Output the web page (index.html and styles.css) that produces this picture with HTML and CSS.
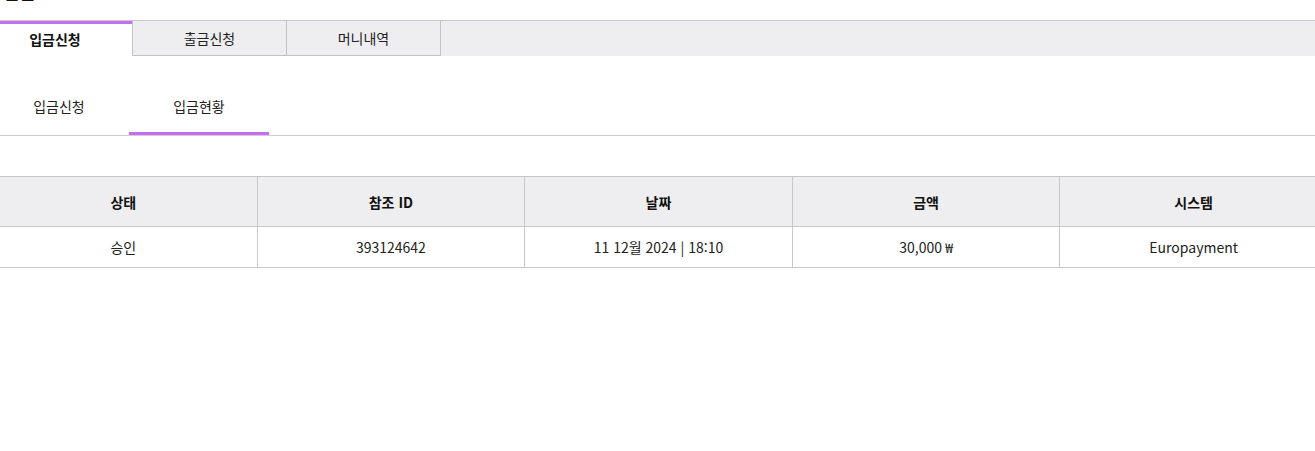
FILE: index.html
```html
<!DOCTYPE html>
<html lang="ko">
<head>
<meta charset="utf-8">
<title>입금</title>
<link rel="stylesheet" href="styles.css">
</head>
<body>
<div class="page">
  <h2 class="title">입금</h2>
  <nav class="tabbar">
    <a class="tab tab-active">입금신청</a>
    <a class="tab">출금신청</a>
    <a class="tab tab-last">머니내역</a>
  </nav>
  <nav class="subtabs">
    <a class="subtab">입금신청</a>
    <a class="subtab subtab-active">입금현황</a>
  </nav>
  <table class="list">
    <thead>
      <tr>
        <th>상태</th>
        <th>참조 ID</th>
        <th>날짜</th>
        <th>금액</th>
        <th>시스템</th>
      </tr>
    </thead>
    <tbody>
      <tr>
        <td>승인</td>
        <td>393124642</td>
        <td>11 12월 2024 | 18:10</td>
        <td>30,000 ₩</td>
        <td>Europayment</td>
      </tr>
    </tbody>
  </table>
</div>
</body>
</html>
```
FILE: styles.css
```css
html, body {
  margin: 0;
  padding: 0;
  background: #fff;
  overflow: hidden;
}
body {
  font-family: "Noto Sans CJK KR", "Noto Sans", sans-serif;
  font-size: 14px;
  color: #111;
}
.page {
  margin-left: -11px;
  width: 1339px;
}
.title {
  margin: -21px 0 17px 14px;
  font-size: 18px;
  line-height: 24px;
  font-weight: 700;
}
.tabbar {
  display: flex;
  margin-left: -11px;
  height: 35px;
  border-top: 1px solid #c8c8c8;
  background: #eeeef0;
}
.tab {
  box-sizing: border-box;
  width: 154px;
  height: 35px;
  line-height: 34px;
  text-align: center;
  border-left: 1px solid #c2c2c2;
  border-bottom: 1px solid #c2c2c2;
  color: #222;
  cursor: pointer;
}
.tab-last {
  width: 155px;
  border-right: 1px solid #c2c2c2;
}
.tab-active {
  background: #fff;
  border: 0;
  border-top: 3px solid #c46ef6;
  line-height: 30px;
  font-weight: 700;
  color: #111;
}
.subtabs {
  display: flex;
  margin-top: 24px;
  border-bottom: 1px solid #cfcfcf;
}
.subtab {
  width: 140px;
  padding: 16px 0;
  line-height: 20px;
  text-align: center;
  border-bottom: 3px solid transparent;
  color: #222;
  cursor: pointer;
}
.subtab-active {
  border-bottom-color: #c46ef6;
}
.list {
  margin-top: 40px;
  width: 1339px;
  table-layout: fixed;
  border-collapse: collapse;
}
.list th,
.list td {
  border: 1px solid #c8c8c8;
  text-align: center;
  vertical-align: middle;
  padding: 0;
}
.list th {
  height: 49px;
  background: #eeeef0;
  font-weight: 700;
  color: #111;
}
.list td {
  height: 40px;
  color: #222;
}
```
